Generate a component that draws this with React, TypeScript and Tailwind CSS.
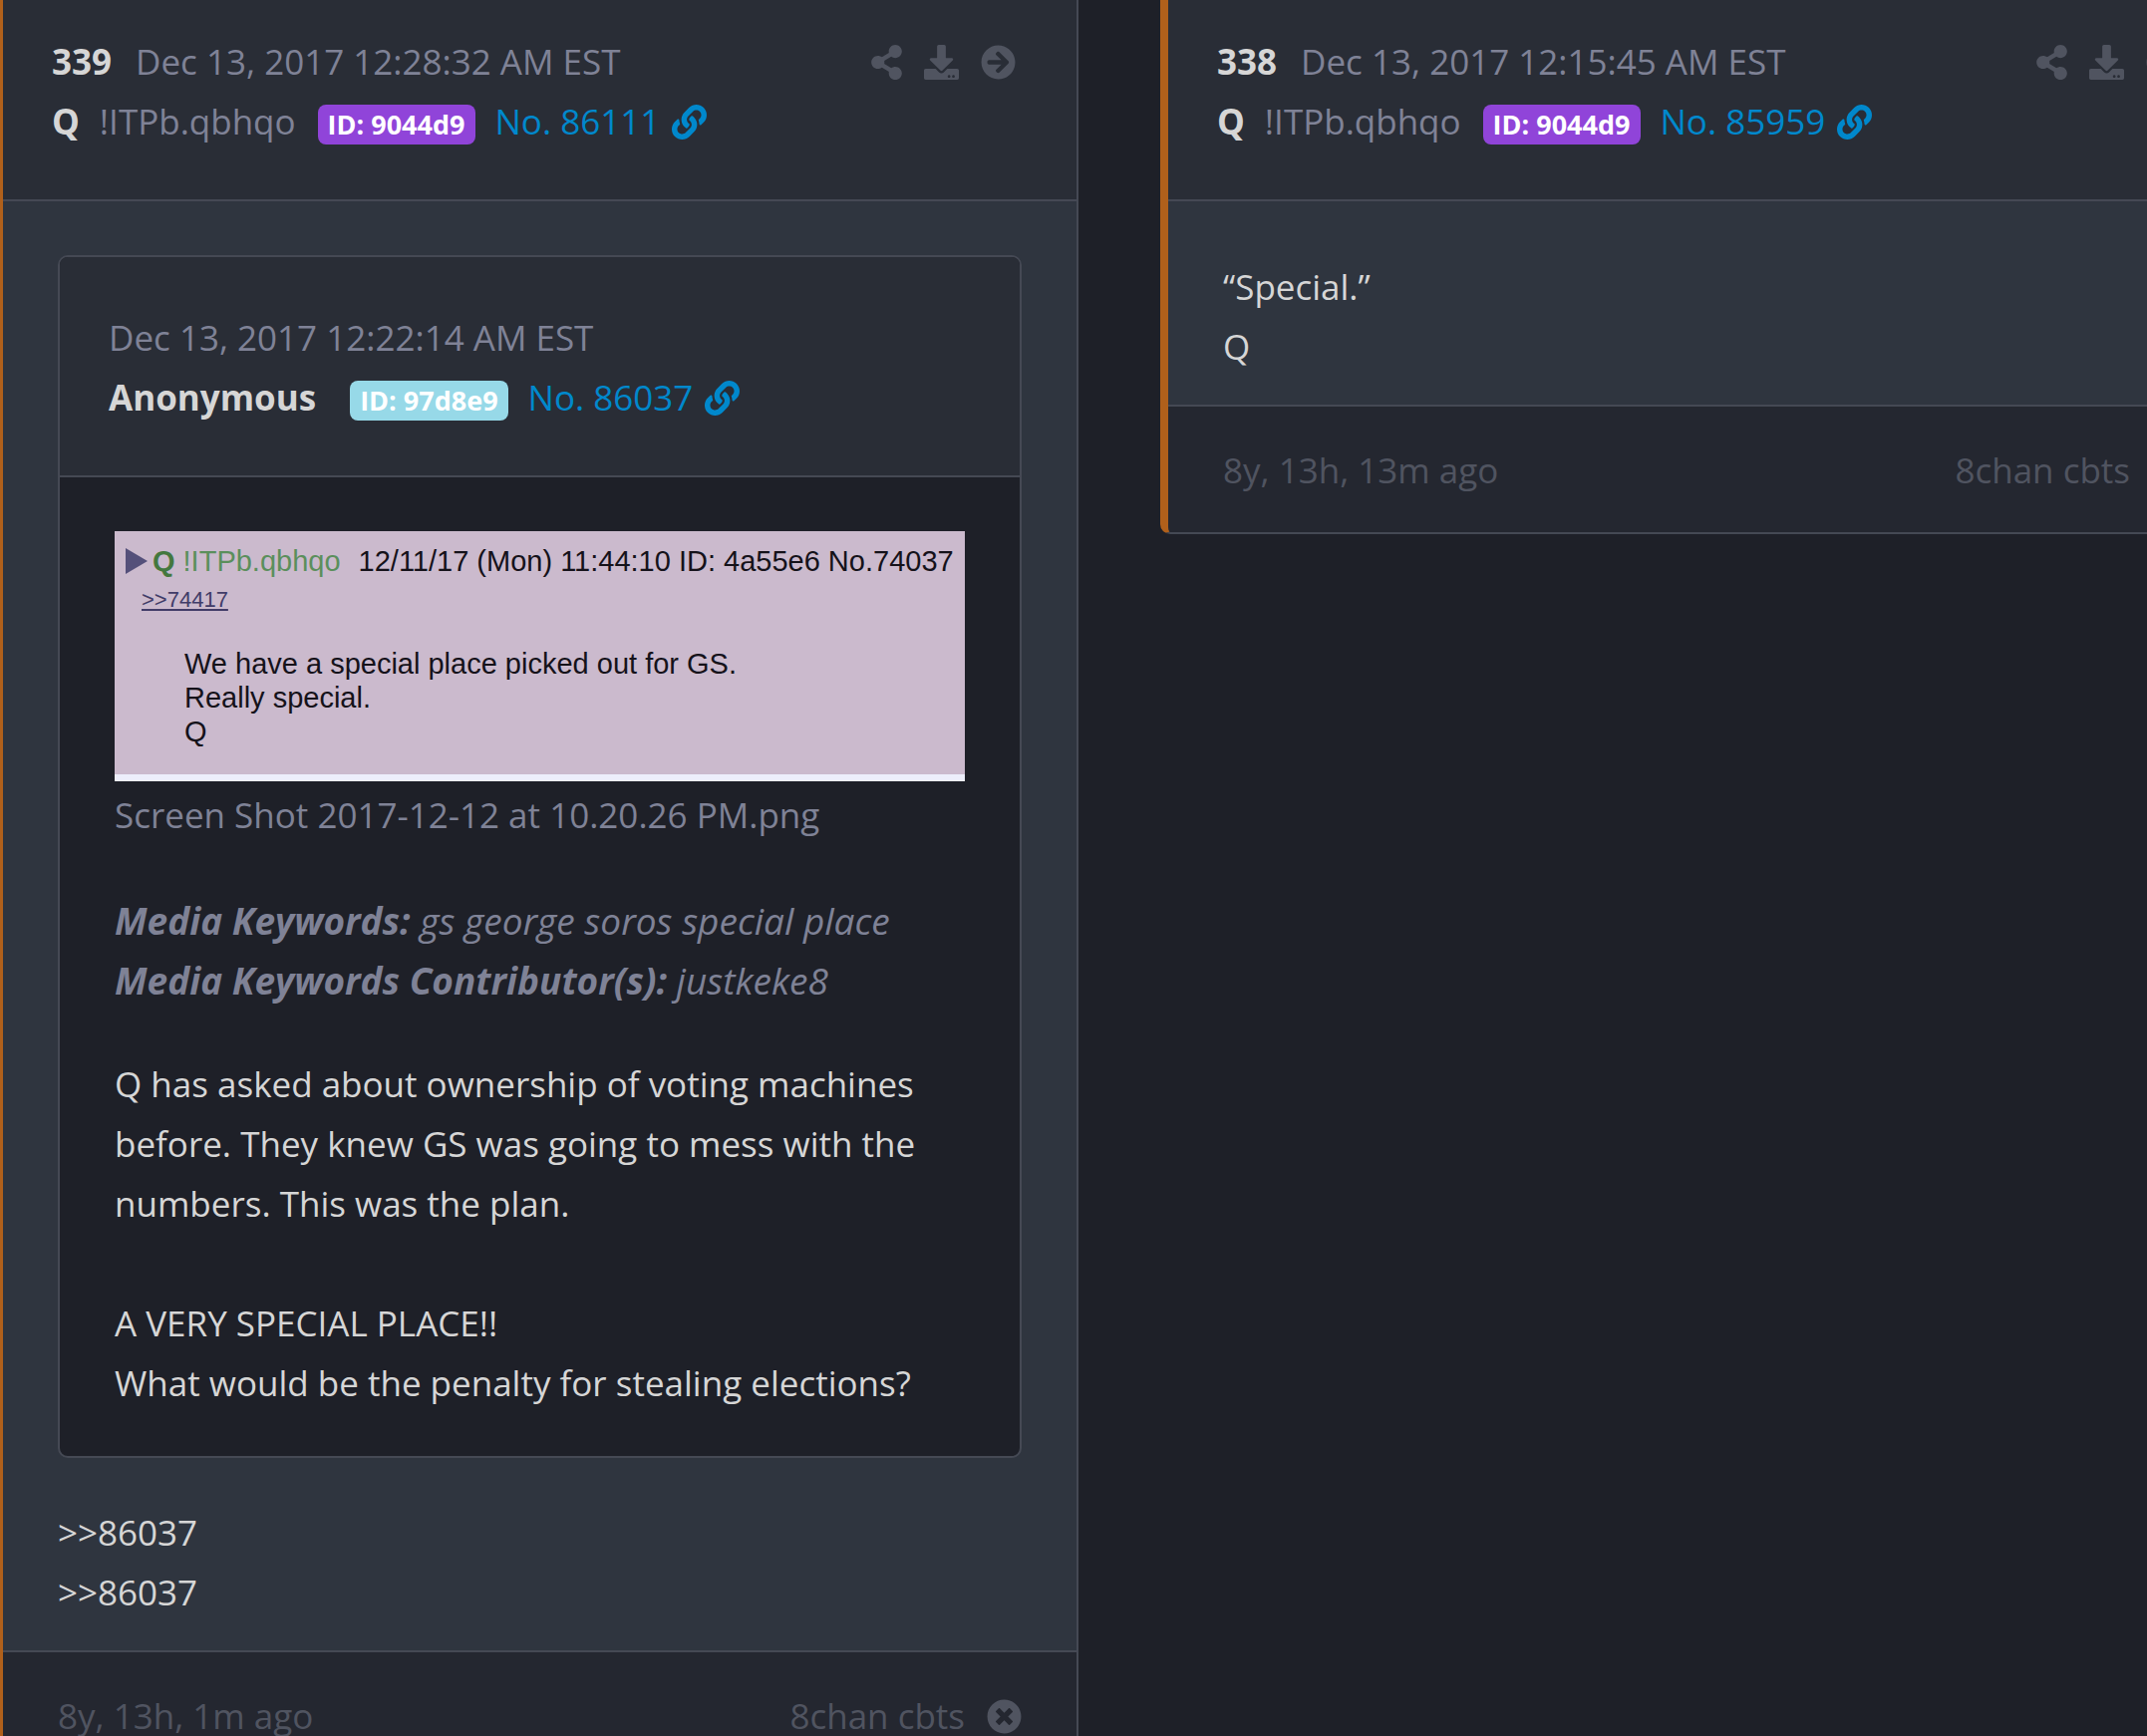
import type { ReactNode } from "react";
import {
  FaArrowCircleRight,
  FaDownload,
  FaLink,
  FaShareAlt,
  FaTimesCircle,
} from "react-icons/fa";

type PostMeta = {
  name: string;
  trip?: string;
  id: string;
  idClass: string;
  no: string;
};

function MetaLine({ name, trip, id, idClass, no }: PostMeta) {
  return (
    <div className="flex items-center">
      <strong className="font-bold text-[#d6d6d6]">{name}</strong>
      {trip && <span className="ml-5">{trip}</span>}
      <span
        className={`mt-[6px] rounded-lg px-[10px] text-[27px] leading-10 font-bold text-white ${trip ? "ml-[22px]" : "ml-[34px]"} ${idClass}`}
      >
        ID: {id}
      </span>
      <a href={`#${no}`} className="ml-5 flex items-center gap-3 text-[#0088cc]">
        No. {no}
        <FaLink />
      </a>
    </div>
  );
}

function IconButton({ label, children }: { label: string; children: ReactNode }) {
  return (
    <button type="button" aria-label={label} className="text-[#505460]">
      {children}
    </button>
  );
}

type PostProps = {
  num: string;
  date: string;
  meta: PostMeta;
  ago: string;
  children: ReactNode;
};

function Post({ num, date, meta, ago, children }: PostProps) {
  return (
    <article className="w-[calc(50%+10px)] shrink-0 overflow-hidden rounded-b-[10px] border-r-2 border-b-2 border-l-8 border-r-[#454954] border-b-[#454954] border-l-[#b0601b] bg-[#2f353f]">
      <header className="border-b-2 border-[#454954] bg-[#292d36] pt-8 pr-[61px] pb-12 pl-[49px]">
        <div className="flex items-center justify-between">
          <div className="flex">
            <strong className="font-bold text-[#d6d6d6]">{num}</strong>
            <time className="ml-6">{date}</time>
          </div>
          <div className="flex gap-[22px]">
            <IconButton label="Share">
              <FaShareAlt className="w-[31px]" />
            </IconButton>
            <IconButton label="Download">
              <FaDownload />
            </IconButton>
            <IconButton label="Go to post">
              <FaArrowCircleRight />
            </IconButton>
          </div>
        </div>
        <MetaLine {...meta} />
      </header>
      <div className="px-[55px] pt-[54px] pb-[26px] text-[#d6d6d6]">{children}</div>
      <footer className="flex items-center justify-between border-t-2 border-[#454954] bg-[#242730] px-[55px] pt-[34px] pb-8 text-[#505460]">
        <span>{ago}</span>
        <div className="flex items-center gap-[22px]">
          <span>8chan cbts</span>
          <IconButton label="Close">
            <FaTimesCircle />
          </IconButton>
        </div>
      </footer>
    </article>
  );
}

function Screenshot() {
  return (
    <div className="h-[251px] overflow-hidden border-b-[7px] border-[#edeefb] bg-[#cbbacd] font-['Liberation_Sans',Arial,sans-serif] text-[29px] leading-[34px] text-[#15121a]">
      <div className="flex items-center pt-[13px] pl-[11px] whitespace-nowrap">
        <svg viewBox="0 0 22 26" className="h-[26px] w-[22px]" aria-hidden="true">
          <path d="M0 0 22 13 0 26Z" fill="#54507a" />
        </svg>
        <b className="ml-[5px] text-[#44783f]">Q</b>
        <span className="ml-2 text-[#5b8f5c]">!ITPb.qbhqo</span>
        <span className="ml-[18px]">12/11/17 (Mon) 11:44:10 ID: 4a55e6 No.74037</span>
      </div>
      <div className="pl-[27px] text-[22px] leading-[44px] text-[#413c68]">
        <span className="underline decoration-2 underline-offset-2">&gt;&gt;74417</span>
      </div>
      <p className="pt-[25px] pl-[70px]">
        We have a special place picked out for GS.
        <br />
        Really special.
        <br />Q
      </p>
    </div>
  );
}

function QuotedPost() {
  return (
    <section className="mb-[43px] overflow-hidden rounded-[10px] border-2 border-[#454954] bg-[#1e2028]">
      <header className="border-b-2 border-[#454954] bg-[#292d36] px-[49px] pt-[51px] pb-12 text-[#7f8296]">
        <time className="block">Dec 13, 2017 12:22:14 AM EST</time>
        <MetaLine name="Anonymous" id="97d8e9" idClass="bg-[#97d9e8]" no="86037" />
      </header>
      <div className="px-[55px] pt-[54px] pb-[43px]">
        <figure>
          <Screenshot />
          <figcaption className="pt-1 text-[#7f8296]">
            Screen Shot 2017-12-12 at 10.20.26 PM.png
          </figcaption>
        </figure>
        <p className="pt-[46px] text-[37px] text-[#7f8296] italic">
          <strong className="font-bold">Media Keywords:</strong> gs george soros special place
          <br />
          <strong className="font-bold">Media Keywords Contributor(s):</strong> justkeke8
        </p>
        <p className="pt-11">
          Q has asked about ownership of voting machines before. They knew GS was going to mess with
          the numbers. This was the plan.
          <br />
          <br />A VERY SPECIAL PLACE!!
          <br />
          What would be the penalty for stealing elections?
        </p>
      </div>
    </section>
  );
}

const qMeta = { name: "Q", trip: "!ITPb.qbhqo", id: "9044d9", idClass: "bg-[#9044d9]" };

export default function App() {
  return (
    <main className="min-h-screen overflow-x-clip bg-[#1e2028] font-['Open_Sans',sans-serif] text-[35px] leading-[60px] text-[#7f8296]">
      {/* the track starts a little off screen, as when scrolled */}
      <div className="-ml-[5px] flex w-full items-start gap-[82px]">
        <Post
          num="339"
          date="Dec 13, 2017 12:28:32 AM EST"
          meta={{ ...qMeta, no: "86111" }}
          ago="8y, 13h, 1m ago"
        >
          <QuotedPost />
          <p className="py-[2px]">
            &gt;&gt;86037
            <br />
            &gt;&gt;86037
          </p>
        </Post>
        <Post
          num="338"
          date="Dec 13, 2017 12:15:45 AM EST"
          meta={{ ...qMeta, no: "85959" }}
          ago="8y, 13h, 13m ago"
        >
          <p className="py-[2px]">
            “Special.”
            <br />Q
          </p>
        </Post>
      </div>
    </main>
  );
}
